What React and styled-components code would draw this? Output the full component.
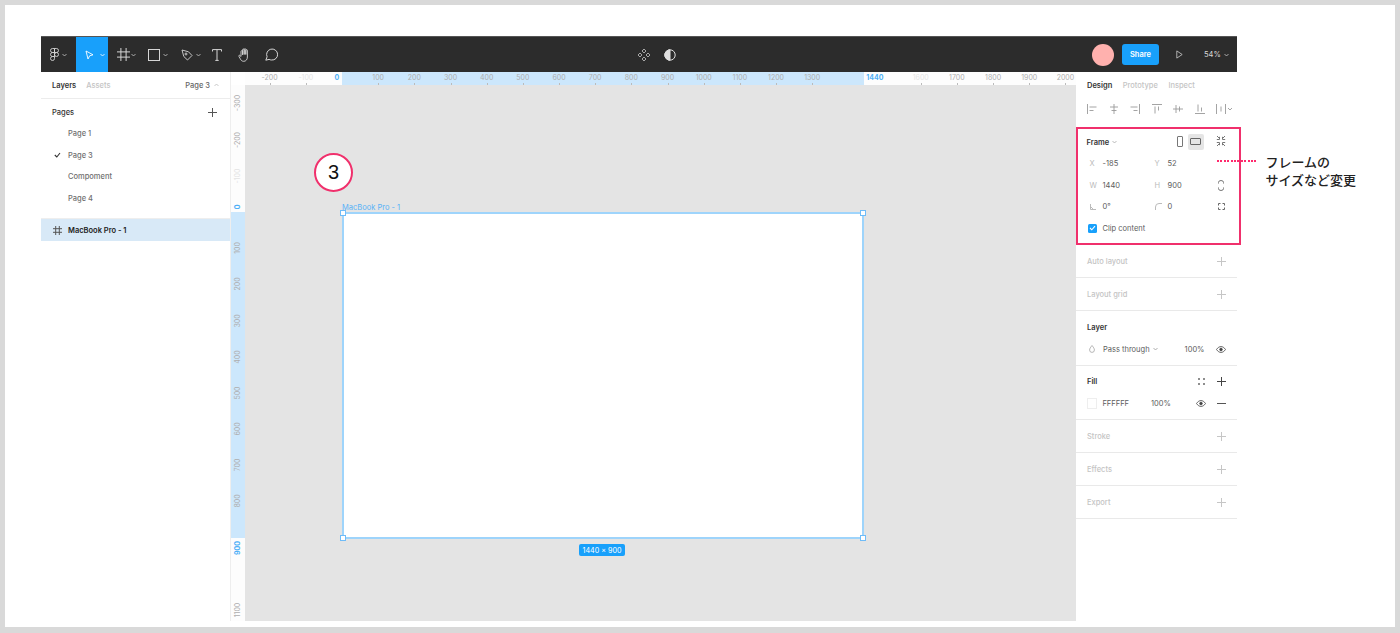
import React from "react";
import styled, { createGlobalStyle } from "styled-components";

const GlobalStyle = createGlobalStyle`
  html, body { margin: 0; padding: 0; background: #fff; }
  * { box-sizing: border-box; }
`;

const SCALE = 0.3617;
const BLUE = "#18a0fb";
const PINK = "#f0306c";

const Page = styled.div`
  width: 1400px;
  height: 633px;
  border: solid #d9d9d9;
  border-width: 5px 5px 6px 5px;
  padding: 31px 158px 0 36px;
  background: #fff;
  font-family: Inter, "Noto Sans", sans-serif;
  font-size: 7.5px;
  color: #4a4a4a;
  overflow: hidden;
`;
const Window = styled.div`
  display: flex;
  flex-direction: column;
  height: 585px;
  width: 1196px;
`;
const Toolbar = styled.div`
  display: flex;
  align-items: stretch;
  justify-content: space-between;
  height: 36px;
  flex: none;
  background: #2c2c2c;
  border-top: 1px solid #555;
  color: #d6d6d6;
`;
const ToolGroup = styled.div`
  display: flex;
  align-items: center;
`;
const ToolButton = styled.div`
  width: ${(p) => p.$w}px;
  height: 100%;
  display: flex;
  align-items: center;
  justify-content: ${(p) => (p.$center ? "center" : "flex-start")};
  padding-left: ${(p) => (p.$center ? 0 : 9)}px;
  gap: ${(p) => p.$gap ?? 3}px;
  background: ${(p) => (p.$active ? BLUE : "transparent")};
`;
const CenterTools = styled(ToolGroup)`
  gap: 13px;
  margin-right: 62px;
`;
const Avatar = styled.div`
  width: 22px;
  height: 22px;
  border-radius: 50%;
  background: #ffb1ae;
  margin-right: 8px;
`;
const ShareButton = styled.div`
  width: 37px;
  height: 21px;
  border-radius: 3px;
  background: ${BLUE};
  color: #fff;
  font-size: 7.5px;
  font-weight: 600;
  display: flex;
  align-items: center;
  justify-content: center;
`;
const PlayWrap = styled.div`
  width: 40px;
  display: flex;
  justify-content: center;
`;
const Zoom = styled.div`
  display: flex;
  align-items: center;
  gap: 3px;
  width: 38px;
  padding-left: 5px;
  font-size: 7.5px;
  color: #d8d8d8;
`;

const Body = styled.div`
  flex: 1;
  display: flex;
  min-height: 0;
`;

/* left panel */
const LeftPanel = styled.div`
  width: 190px;
  flex: none;
  background: #fff;
  border-right: 1px solid #eee;
`;
const LeftHeader = styled.div`
  height: 27px;
  display: flex;
  align-items: center;
  padding: 0 11px;
  gap: 10px;
  border-bottom: 1px solid #ececec;
  font-weight: 500;
`;
const Tab = styled.span`
  color: ${(p) => (p.$on ? "#333" : "#c4c4c4")};
  font-weight: ${(p) => (p.$on ? 600 : 500)};
`;
const PageSwitch = styled.span`
  margin-left: auto;
  display: flex;
  align-items: center;
  gap: 4px;
  color: #666;
`;
const PagesTitle = styled.div`
  height: 24px;
  display: flex;
  align-items: center;
  justify-content: space-between;
  padding: 3px 13px 0 11px;
  color: #333;
  font-weight: 500;
`;
const PagesList = styled.div`
  height: 96px;
  border-bottom: 1px solid #eee;
`;
const PageRow = styled.div`
  height: 21.6px;
  display: flex;
  align-items: center;
  padding-left: 13px;
  gap: 7px;
  color: #707070;
  font-weight: 500;
`;
const CheckSlot = styled.span`
  width: 7px;
  display: flex;
`;
const LayerRow = styled.div`
  height: 22px;
  background: #d8e9f7;
  display: flex;
  align-items: center;
  padding-left: 12px;
  gap: 6px;
  font-weight: 600;
  color: #222;
`;

/* centre */
const Stage = styled.div`
  flex: 1;
  display: grid;
  grid-template-columns: 14px 1fr;
  grid-template-rows: 13px 1fr;
  min-width: 0;
`;
const Corner = styled.div`
  background: #fff;
`;
const TopRuler = styled.div`
  position: relative;
  background: #fdfdfd;
  overflow: hidden;
`;
const SideRuler = styled.div`
  position: relative;
  background: #fdfdfd;
  overflow: hidden;
`;
const TopBand = styled.div`
  position: absolute;
  top: 0;
  bottom: 0;
  left: 97px;
  width: 522px;
  background: #cce7fc;
`;
const SideBand = styled.div`
  position: absolute;
  left: 0;
  right: 0;
  top: 127px;
  height: 326px;
  background: #cce7fc;
`;
const toneColor = { base: "#aeaeae", faint: "#e4e4e4", blue: "#4fb0f7" };
const TopLabel = styled.span`
  position: absolute;
  top: 1px;
  transform: translateX(-50%);
  font-size: 7px;
  line-height: 9px;
  white-space: nowrap;
  font-weight: ${(p) => (p.$tone === "blue" ? 700 : 400)};
  color: ${(p) => toneColor[p.$tone]};
`;
const TopTick = styled.i`
  position: absolute;
  bottom: 0;
  width: 1px;
  height: 2px;
  background: #bbb;
`;
const SideLabel = styled.span`
  position: absolute;
  left: 6px;
  transform: translate(-50%, -50%) rotate(-90deg);
  font-size: 7px;
  line-height: 9px;
  white-space: nowrap;
  font-weight: ${(p) => (p.$tone === "blue" ? 700 : 400)};
  color: ${(p) => toneColor[p.$tone]};
`;
const Canvas = styled.div`
  position: relative;
  background: #e4e4e4;
`;
const Frame = styled.div`
  position: absolute;
  left: 97px;
  top: 127px;
  width: 522px;
  height: 327px;
  background: #fff;
  border: 2px solid #9ed4fb;
`;
const FrameName = styled.span`
  position: absolute;
  left: -2px;
  top: -11px;
  font-size: 7.5px;
  line-height: 10px;
  color: #58b2f7;
  white-space: nowrap;
`;
const Handle = styled.i`
  position: absolute;
  width: 6px;
  height: 6px;
  background: #fff;
  border: 1px solid #6fbcf8;
  ${(p) => (p.$top ? "top: -4px;" : "bottom: -4px;")}
  ${(p) => (p.$left ? "left: -4px;" : "right: -4px;")}
`;
const SizeBadge = styled.span`
  position: absolute;
  left: 235px;
  bottom: -19px;
  width: 46px;
  height: 12px;
  border-radius: 2px;
  background: ${BLUE};
  color: #fff;
  font-size: 7.2px;
  display: flex;
  align-items: center;
  justify-content: center;
  white-space: nowrap;
`;
const StepBadge = styled.div`
  position: absolute;
  left: 69px;
  top: 68px;
  width: 39px;
  height: 39px;
  border-radius: 50%;
  background: #fff;
  border: 2.5px solid ${PINK};
  color: #111;
  font-family: "Liberation Sans", sans-serif;
  font-size: 20px;
  display: flex;
  align-items: center;
  justify-content: center;
`;

/* right panel */
const RightPanel = styled.div`
  width: 161px;
  flex: none;
  background: #fff;
`;
const RightTabs = styled.div`
  height: 27px;
  display: flex;
  align-items: center;
  padding-left: 11px;
  gap: 10.5px;
  font-weight: 500;
`;
const AlignRow = styled.div`
  height: 28px;
  padding: 0 6px 8px 11px;
  display: flex;
  align-items: center;
  gap: 11.5px;
`;
const FrameSection = styled.div`
  position: relative;
  width: 165px;
  height: 118px;
  border: 2.5px solid ${PINK};
  z-index: 2;
  background: #fff;
`;
const FrameHead = styled.div`
  height: 23.75px;
  display: flex;
  align-items: center;
  padding: 3px 0 0 8.5px;
  gap: 3px;
  color: #333;
  font-weight: 600;
  position: relative;
`;
const FrameIcons = styled.div`
  position: absolute;
  left: 93.5px;
  top: 4.5px;
  display: flex;
  align-items: center;
`;
const DeviceIcon = styled.span`
  width: 16px;
  height: 16.5px;
  border-radius: 2px;
  display: flex;
  align-items: center;
  justify-content: center;
  background: ${(p) => (p.$on ? "#e5e5e5" : "transparent")};
`;
const CollapseIcon = styled.span`
  position: absolute;
  left: 138px;
  top: 7px;
  display: flex;
`;
const PropRow = styled.div`
  height: 21.6px;
  display: grid;
  grid-template-columns: 13px 52px 13px 1fr 18px;
  align-items: center;
  padding-left: 11.5px;
  padding-right: 9px;
  & > svg {
    grid-column: 5;
    justify-self: center;
  }
`;
const PropKey = styled.span`
  color: #bbb;
  display: flex;
  align-items: center;
`;
const PropValue = styled.span`
  color: #5c5c5c;
`;
const ClipRow = styled.div`
  height: 21.6px;
  display: flex;
  align-items: center;
  padding-left: 9.5px;
  gap: 6px;
  color: #5c5c5c;
`;
const CheckBox = styled.span`
  width: 9px;
  height: 9px;
  border-radius: 1.5px;
  background: ${BLUE};
  display: flex;
  align-items: center;
  justify-content: center;
`;
const Leader = styled.i`
  position: absolute;
  left: 139px;
  top: 31px;
  width: 41px;
  height: 2px;
  background: repeating-linear-gradient(
    90deg,
    #ff2a6d 0 2px,
    transparent 2px 3.4px
  );
`;
const Note = styled.div`
  position: absolute;
  left: 187.5px;
  top: 24px;
  width: 110px;
  font-family: "Noto Sans CJK JP", sans-serif;
  font-size: 13px;
  line-height: 18px;
  font-weight: 500;
  color: #222;
`;
const Section = styled.div`
  border-bottom: 1px solid #e9e9e9;
  padding: 0 11px;
`;
const OpenSection = styled(Section)`
  padding: ${(p) => p.$top}px 11px 5px;
`;
const SectionHead = styled.div`
  height: ${(p) => (p.$on ? 22 : 32)}px;
  display: flex;
  align-items: center;
  justify-content: space-between;
  font-weight: ${(p) => (p.$on ? 600 : 500)};
  color: ${(p) => (p.$on ? "#333" : "#c4c4c4")};
`;
const HeadActions = styled.span`
  display: flex;
  align-items: center;
  gap: 12.5px;
`;
const LayerLine = styled.div`
  height: 22px;
  display: flex;
  align-items: center;
  color: #5c5c5c;
  white-space: nowrap;
`;
const BlendIcon = styled.span`
  width: 16px;
  padding-left: 2px;
  display: flex;
`;
const BlendChevron = styled.span`
  margin-left: 3px;
  display: flex;
`;
const Opacity = styled.span`
  margin-left: ${(p) => p.$gap}px;
  width: ${(p) => p.$w}px;
`;
const Swatch = styled.span`
  width: 11px;
  height: 11px;
  margin-right: 5px;
  background: #fff;
  border: 1px solid #eee;
`;
const Minus = styled.span`
  margin-left: 11px;
  display: flex;
`;

const Svg = ({ w, h, children, color = "currentColor", sw = 1 }) => (
  <svg
    width={w}
    height={h}
    viewBox={`0 0 ${w} ${h}`}
    fill="none"
    stroke={color}
    strokeWidth={sw}
    style={{ display: "block", flex: "none" }}
  >
    {children}
  </svg>
);

const Chevron = ({ color = "#c8c8c8" }) => (
  <Svg w={5} h={4} color={color} sw={0.8}>
    <path d="M.5 1l2 2 2-2" />
  </Svg>
);
const Plus = ({ color = "#c6c6c6", size = 9 }) => (
  <Svg w={size} h={size} color={color}>
    <path d={`M${size / 2} 0v${size}M0 ${size / 2}h${size}`} />
  </Svg>
);
const Eye = () => (
  <Svg w={10} h={7} color="#444" sw={0.8}>
    <path d="M.5 3.5C2 1.300 3.500.6 5 .6s3 .7 4.500 2.900C8 5.700 6.500 6.400 5 6.400S2 5.700.5 3.500z" />
    <circle cx="5" cy="3.500" r="1.300" fill="#444" />
  </Svg>
);
const Hash = ({ size = 13, color = "#d6d6d6" }) => (
  <Svg w={size} h={size} color={color}>
    <path
      d={`M${size * 0.3} 0v${size}M${size * 0.7} 0v${size}M0 ${size * 0.3}h${size}M0 ${size * 0.7}h${size}`}
    />
  </Svg>
);

const AlignIcon = ({ d }) => (
  <Svg w={10} h={10} color="#9a9a9a" sw={0.9}>
    <path d={d} />
  </Svg>
);

const ALIGN_PATHS = [
  "M.5 0v10M2.500 3h7M2.500 6.500h4",
  "M5 0v10M1 3h8M2.500 6.500h5",
  "M9.500 0v10M.5 3h7M3.500 6.500h4",
  "M0 .5h10M3 2.500v7M6.500 2.500v4",
  "M0 5h10M3 1v8M6.500 2.500v5",
  "M0 9.500h10M3 .5v7M6.500 3.500v4",
];

const TOP_LABELS = [
  ["-200", -200, "base"],
  ["-100", -100, "faint"],
  ["0", -14, "blue"],
  ["100", 100, "base"],
  ["200", 200, "base"],
  ["300", 300, "base"],
  ["400", 400, "base"],
  ["500", 500, "base"],
  ["600", 600, "base"],
  ["700", 700, "base"],
  ["800", 800, "base"],
  ["900", 900, "base"],
  ["1000", 1000, "base"],
  ["1100", 1100, "base"],
  ["1200", 1200, "base"],
  ["1300", 1300, "base"],
  ["1440", 1473, "blue"],
  ["1600", 1600, "faint"],
  ["1700", 1700, "base"],
  ["1800", 1800, "base"],
  ["1900", 1900, "base"],
  ["2000", 2000, "base"],
];
const SIDE_LABELS = [
  ["-300", -300, "base"],
  ["-200", -200, "base"],
  ["-100", -100, "faint"],
  ["0", -14, "blue"],
  ["100", 100, "base"],
  ["200", 200, "base"],
  ["300", 300, "base"],
  ["400", 400, "base"],
  ["500", 500, "base"],
  ["600", 600, "base"],
  ["700", 700, "base"],
  ["800", 800, "base"],
  ["900", 930, "blue"],
  ["1100", 1100, "base"],
];

const COLLAPSED_TOP = ["Auto layout", "Layout grid"];
const COLLAPSED_BOTTOM = ["Stroke", "Effects", "Export"];

export default function App() {
  return (
    <Page>
      <GlobalStyle />
      <Window>
        <Toolbar>
          <ToolGroup>
            <ToolButton $w={35}>
              <Svg w={9} h={13} sw={0.9}>
                <path d="M4.500.5H2.500a2 2 0 000 4h2zM4.500.5h2a2 2 0 010 4h-2zM4.500 4.500h-2a2 2 0 000 4h2zM4.500 8.500h-2a2 2 0 102 2z" />
                <circle cx="6.500" cy="6.500" r="2" />
              </Svg>
              <Chevron />
            </ToolButton>
            <ToolButton $w={32} $gap={5.5} $active>
              <Svg w={9} h={10} color="#fff" sw={0.9}>
                <path d="M1 1l7 3.800-3.300 1L3 9z" />
              </Svg>
              <Chevron color="#fff" />
            </ToolButton>
            <ToolButton $w={31} $gap={1}>
              <Hash />
              <Chevron />
            </ToolButton>
            <ToolButton $w={33}>
              <Svg w={12} h={12}>
                <rect x=".5" y=".5" width="11" height="11" />
              </Svg>
              <Chevron />
            </ToolButton>
            <ToolButton $w={33}>
              <Svg w={12} h={12} sw={0.9}>
                <path d="M1 1l6.500 1.800 3.500 3.700-4.500 4.500L2.800 7.500z" />
                <circle cx="5" cy="5" r="1" />
              </Svg>
              <Chevron />
            </ToolButton>
            <ToolButton $w={24} $center>
              <Svg w={10} h={12}>
                <path d="M.5 2.500V.6h9v1.900M5 .6v10.800M3.300 11.400h3.400" />
              </Svg>
            </ToolButton>
            <ToolButton $w={30} $center>
              <Svg w={13} h={14} sw={0.9}>
                <path d="M3 8V3.500a.8.8 0 011.600 0V7M4.600 6.500V1.800a.8.8 0 011.600 0V6.500M6.200 6.500V1.500a.8.8 0 011.600 0V6.500M7.800 6.500V2.500a.8.8 0 011.600 0V9c0 2.500-1.500 4.300-3.600 4.300-2 0-2.800-1-3.500-2.500L.9 8.300c-.4-.9.800-1.500 1.300-.7L3 8.800" />
              </Svg>
            </ToolButton>
            <ToolButton $w={24} $center>
              <Svg w={13} h={13}>
                <path d="M.8 12.200l1.300-3.400A5.500 5.500 0 116.500 12a5.600 5.600 0 01-2.400-.6z" />
              </Svg>
            </ToolButton>
          </ToolGroup>
          <CenterTools>
            <Svg w={14} h={14} color="#b4b4b4" sw={0.9}>
              <path d="M7 1l2 2-2 2-2-2zM7 9l2 2-2 2-2-2zM3 5l2 2-2 2-2-2zM11 5l2 2-2 2-2-2z" />
            </Svg>
            <Svg w={12} h={12} color="#e0e0e0">
              <circle cx="6" cy="6" r="5.200" />
              <path d="M6 .8a5.200 5.200 0 000 10.400z" fill="#e0e0e0" />
            </Svg>
          </CenterTools>
          <ToolGroup>
            <Avatar />
            <ShareButton>Share</ShareButton>
            <PlayWrap>
              <Svg w={7} h={9} color="#bdbdbd" sw={0.9}>
                <path d="M.8.9l5.400 3.600-5.400 3.600z" />
              </Svg>
            </PlayWrap>
            <Zoom>
              54%
              <Chevron />
            </Zoom>
          </ToolGroup>
        </Toolbar>
        <Body>
          <LeftPanel>
            <LeftHeader>
              <Tab $on>Layers</Tab>
              <Tab>Assets</Tab>
              <PageSwitch>
                Page 3
                <Svg w={5} h={4} color="#bbb" sw={0.8}>
                  <path d="M.5 3l2-2 2 2" />
                </Svg>
              </PageSwitch>
            </LeftHeader>
            <PagesTitle>
              Pages
              <Plus color="#555" />
            </PagesTitle>
            <PagesList>
              {["Page 1", "Page 3", "Compoment", "Page 4"].map((name) => (
                <PageRow key={name}>
                  <CheckSlot>
                    {name === "Page 3" && (
                      <Svg w={7} h={6} color="#333" sw={1.1}>
                        <path d="M.8 3l2 2L6 1" />
                      </Svg>
                    )}
                  </CheckSlot>
                  {name}
                </PageRow>
              ))}
            </PagesList>
            <LayerRow>
              <Hash size={9} color="#555" />
              MacBook Pro - 1
            </LayerRow>
          </LeftPanel>
          <Stage>
            <Corner />
            <TopRuler>
              <TopBand />
              {TOP_LABELS.map(([text, at, tone]) => (
                <React.Fragment key={text}>
                  <TopLabel $tone={tone} style={{ left: 97 + at * SCALE }}>
                    {text}
                  </TopLabel>
                  {tone !== "blue" && (
                    <TopTick style={{ left: 97 + at * SCALE }} />
                  )}
                </React.Fragment>
              ))}
            </TopRuler>
            <SideRuler>
              <SideBand />
              {SIDE_LABELS.map(([text, at, tone]) => (
                <SideLabel
                  key={text}
                  $tone={tone}
                  style={{ top: 127 + at * SCALE }}
                >
                  {text}
                </SideLabel>
              ))}
            </SideRuler>
            <Canvas>
              <StepBadge>3</StepBadge>
              <Frame>
                <FrameName>MacBook Pro - 1</FrameName>
                <Handle $top $left />
                <Handle $top />
                <Handle $left />
                <Handle />
                <SizeBadge>1440 × 900</SizeBadge>
              </Frame>
            </Canvas>
          </Stage>
          <RightPanel>
            <RightTabs>
              <Tab $on>Design</Tab>
              <Tab>Prototype</Tab>
              <Tab>Inspect</Tab>
            </RightTabs>
            <AlignRow>
              {ALIGN_PATHS.map((d) => (
                <AlignIcon key={d} d={d} />
              ))}
              <Svg w={16} h={10} color="#9a9a9a" sw={0.9}>
                <path d="M.5 0v10M9.500 0v10M5 2.500v5M12 4l2 2 2-2" />
              </Svg>
            </AlignRow>
            <FrameSection>
              <FrameHead>
                Frame
                <Chevron color="#aaa" />
                <FrameIcons>
                  <DeviceIcon>
                    <Svg w={6} h={11} color="#777">
                      <rect x=".5" y=".5" width="5" height="10" rx=".5" />
                    </Svg>
                  </DeviceIcon>
                  <DeviceIcon $on>
                    <Svg w={11} h={7} color="#666">
                      <rect x=".5" y=".5" width="10" height="6" rx=".5" />
                    </Svg>
                  </DeviceIcon>
                </FrameIcons>
                <CollapseIcon>
                  <Svg w={10} h={10} color="#777">
                    <path d="M1 0l2.500 2.500M3.500.8v2.700H.8M9 0L6.500 2.500M6.500.8v2.700h2.700M1 10l2.500-2.500M3.500 9.200V6.500H.8M9 10L6.500 7.500M6.500 9.200V6.500h2.700" />
                  </Svg>
                </CollapseIcon>
              </FrameHead>
              <PropRow>
                <PropKey>X</PropKey>
                <PropValue>-185</PropValue>
                <PropKey>Y</PropKey>
                <PropValue>52</PropValue>
              </PropRow>
              <PropRow>
                <PropKey>W</PropKey>
                <PropValue>1440</PropValue>
                <PropKey>H</PropKey>
                <PropValue>900</PropValue>
                <Svg w={6} h={11} color="#777">
                  <path d="M.5 3.500V2.500a2.500 2 0 015 0v1M.5 7.500v1a2.500 2 0 005 0v-1" />
                </Svg>
              </PropRow>
              <PropRow>
                <PropKey>
                  <Svg w={6} h={6} color="#bbb">
                    <path d="M.5 0v5.500H6M.5 2.500L3.500 5.500" />
                  </Svg>
                </PropKey>
                <PropValue>0°</PropValue>
                <PropKey>
                  <Svg w={7} h={7} color="#bbb">
                    <path d="M.5 7V4A3.500 3.500 0 014 .5h3" />
                  </Svg>
                </PropKey>
                <PropValue>0</PropValue>
                <Svg w={7} h={7} color="#666">
                  <path d="M.5 2.500v-2h2M4.500.5h2v2M6.500 4.500v2h-2M2.500 6.500h-2v-2" />
                </Svg>
              </PropRow>
              <ClipRow>
                <CheckBox>
                  <Svg w={7} h={6} color="#fff" sw={1.1}>
                    <path d="M1 3l1.800 1.800L6 1.200" />
                  </Svg>
                </CheckBox>
                Clip content
              </ClipRow>
              <Leader />
              <Note>
                フレームの
                <br />
                サイズなど変更
              </Note>
            </FrameSection>
            {COLLAPSED_TOP.map((name) => (
              <Section key={name}>
                <SectionHead>
                  {name}
                  <Plus />
                </SectionHead>
              </Section>
            ))}
            <OpenSection $top={5}>
              <SectionHead $on>Layer</SectionHead>
              <LayerLine>
                <BlendIcon>
                  <Svg w={6} h={8} color="#999" sw={0.7}>
                    <path d="M3 .5C1.500 2.500.6 3.500.6 5a2.400 2.400 0 004.800 0C5.400 3.500 4.500 2.500 3 .5z" />
                  </Svg>
                </BlendIcon>
                Pass through
                <BlendChevron>
                  <Chevron color="#999" />
                </BlendChevron>
                <Opacity $gap={27} $w={31}>
                  100%
                </Opacity>
                <Eye />
              </LayerLine>
            </OpenSection>
            <OpenSection $top={4}>
              <SectionHead $on>
                Fill
                <HeadActions>
                  <Svg w={7} h={7} color="#444" sw={1.6}>
                    <path d="M1 1.800v-1.600M6 1.800v-1.600M1 6.800v-1.600M6 6.800v-1.600" />
                  </Svg>
                  <Plus color="#444" />
                </HeadActions>
              </SectionHead>
              <LayerLine>
                <Swatch />
                FFFFFF
                <Opacity $gap={22} $w={48}>
                  100%
                </Opacity>
                <Eye />
                <Minus>
                  <Svg w={9} h={1} color="#555">
                    <path d="M0 .5h9" />
                  </Svg>
                </Minus>
              </LayerLine>
            </OpenSection>
            {COLLAPSED_BOTTOM.map((name) => (
              <Section key={name}>
                <SectionHead>
                  {name}
                  <Plus />
                </SectionHead>
              </Section>
            ))}
          </RightPanel>
        </Body>
      </Window>
    </Page>
  );
}
